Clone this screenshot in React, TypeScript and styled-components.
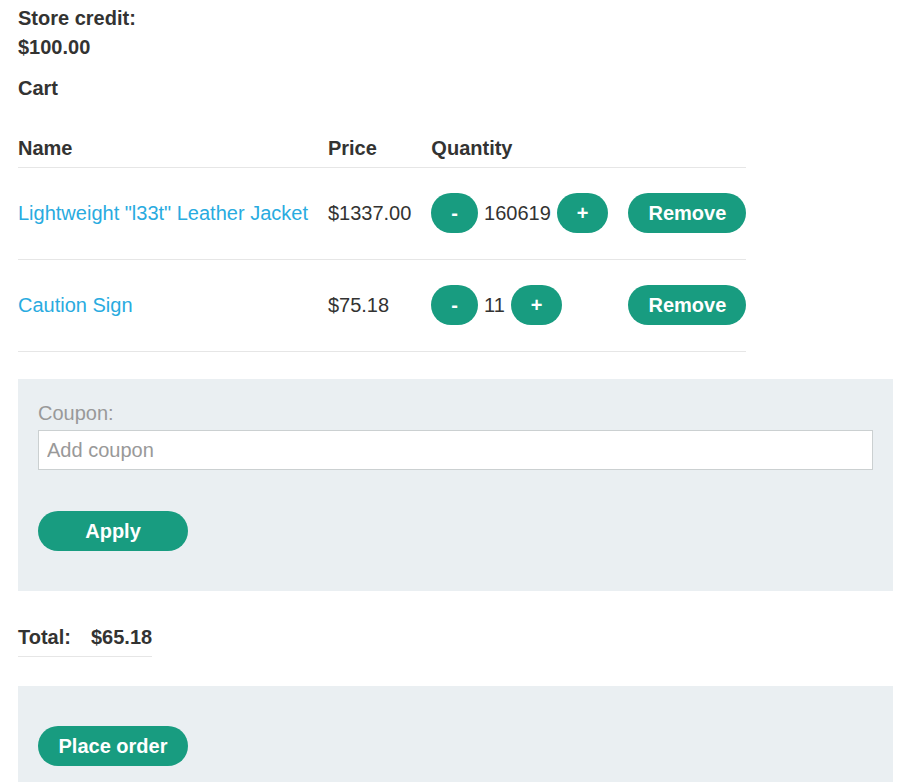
import React from "react";
import styled, { createGlobalStyle } from "styled-components";

const GlobalStyle = createGlobalStyle`
  html, body {
    margin: 0;
    padding: 0;
    background: #ffffff;
  }
  body {
    font-family: "Liberation Sans", Arial, sans-serif;
    font-size: 20px;
    color: #333332;
  }
  * { box-sizing: border-box; }
`;

const Page = styled.div`
  padding: 0 8px 0 18px;
`;

const Credit = styled.div`
  margin-top: 4px;
  font-weight: bold;
  line-height: 29px;
`;

const Heading = styled.div`
  margin-top: 15px;
  font-weight: bold;
  line-height: 23px;
`;

const CartTable = styled.table`
  margin-top: 37px;
  border-collapse: collapse;
  border-spacing: 0;
`;

const Th = styled.th`
  text-align: left;
  font-weight: bold;
  line-height: 23px;
  padding: 0 20px 7px 0;
  border-bottom: 1px solid #e6e6e6;
  white-space: nowrap;
  &:last-child { padding-right: 0; }
`;

const Td = styled.td`
  padding: 25px 20px 26px 0;
  line-height: 23px;
  vertical-align: middle;
  border-bottom: 1px solid #e6e6e6;
  white-space: nowrap;
  &:last-child { padding-right: 0; }
`;

const ProductLink = styled.a`
  color: #29abe0;
  text-decoration: none;
`;

const QtyWrap = styled.div`
  display: flex;
  align-items: center;
  gap: 6px;
`;

const Button = styled.button<{ $wide?: boolean }>`
  display: inline-flex;
  align-items: center;
  justify-content: center;
  height: 40px;
  min-width: ${(p) => (p.$wide ? "150px" : "0")};
  padding: 0 20px;
  border: none;
  border-radius: 20px;
  background: #189c80;
  color: #ffffff;
  font-family: "Liberation Sans", Arial, sans-serif;
  font-size: 20px;
  font-weight: bold;
  cursor: pointer;
`;

const Panel = styled.div<{ $top: number }>`
  margin-top: ${(p) => p.$top}px;
  background: #eaeff2;
  padding: 40px 20px;
`;

const CouponPanel = styled(Panel)`
  padding-top: 23px;
`;

const Label = styled.label`
  display: block;
  color: #999999;
  line-height: 23px;
  margin-bottom: 5px;
`;

const Input = styled.input`
  display: block;
  width: 100%;
  height: 40px;
  border: 1px solid #cbd0d1;
  background: #ffffff;
  padding: 0 8px;
  font-family: "Liberation Sans", Arial, sans-serif;
  font-size: 20px;
  color: #333332;
  margin-bottom: 41px;
  outline: none;
  &::placeholder { color: #999999; }
`;

const TotalTable = styled.table`
  margin-top: 35px;
  border-collapse: collapse;
  border-spacing: 0;
`;

const TotalCell = styled.th`
  text-align: left;
  font-weight: bold;
  line-height: 23px;
  padding: 0 20px 7px 0;
  border-bottom: 1px solid #e6e6e6;
  &:last-child { padding-right: 0; }
`;

type Item = { name: string; price: string; qty: number };

const items: Item[] = [
  { name: 'Lightweight "l33t" Leather Jacket', price: "$1337.00", qty: 160619 },
  { name: "Caution Sign", price: "$75.18", qty: 11 },
];

export default function App() {
  return (
    <Page>
      <GlobalStyle />
      <Credit>
        Store credit:
        <br />
        $100.00
      </Credit>
      <Heading>Cart</Heading>
      <CartTable>
        <thead>
          <tr>
            <Th>Name</Th>
            <Th>Price</Th>
            <Th>Quantity</Th>
            <Th></Th>
          </tr>
        </thead>
        <tbody>
          {items.map((it) => (
            <tr key={it.name}>
              <Td>
                <ProductLink href="#">{it.name}</ProductLink>
              </Td>
              <Td>{it.price}</Td>
              <Td>
                <QtyWrap>
                  <Button>-</Button>
                  <span>{it.qty}</span>
                  <Button>+</Button>
                </QtyWrap>
              </Td>
              <Td>
                <Button>Remove</Button>
              </Td>
            </tr>
          ))}
        </tbody>
      </CartTable>
      <CouponPanel $top={27}>
        <Label htmlFor="coupon">Coupon:</Label>
        <Input id="coupon" placeholder="Add coupon" />
        <Button $wide>Apply</Button>
      </CouponPanel>
      <TotalTable>
        <tbody>
          <tr>
            <TotalCell>Total:</TotalCell>
            <TotalCell>$65.18</TotalCell>
          </tr>
        </tbody>
      </TotalTable>
      <Panel $top={29}>
        <Button $wide>Place order</Button>
      </Panel>
    </Page>
  );
}
